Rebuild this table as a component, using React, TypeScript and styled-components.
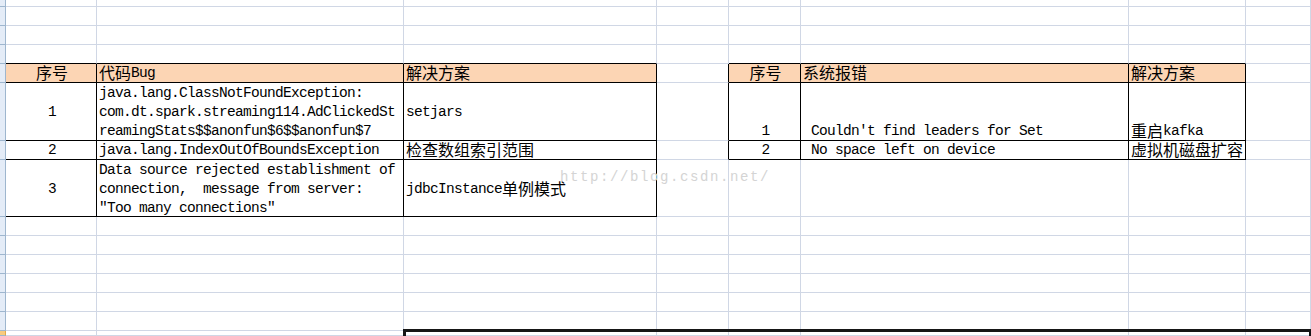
import styled, { createGlobalStyle } from "styled-components";

const GlobalStyle = createGlobalStyle`
  html, body {
    margin: 0;
    height: 100%;
    background: #fff;
  }
  #root {
    height: 100%;
  }
`;

const GRID = "#d0d7e5";
const INK = "#000";

type VAlign = "flex-start" | "center" | "flex-end";

type Entry = {
  lines: string[];
  align?: "left" | "center";
  valign?: VAlign;
  head?: boolean;
};

const Sheet = styled.div`
  position: relative;
  display: grid;
  grid-template-columns: 6px 91px 307px 253px 72px 72px 328px 117px 1fr;
  grid-template-rows: 7px repeat(4, 19px) 58px 19px 57px repeat(6, 19px) 1fr;
  height: 100vh;
  overflow: hidden;
  font-family: "Liberation Mono", "Noto Sans CJK SC", monospace;
  font-size: 14.5px;
  letter-spacing: -0.7px;
  color: #000;
`;

const RowHead = styled.div<{ $active?: boolean }>`
  box-sizing: border-box;
  background: ${({ $active }) => ($active ? "#f8cb7e" : "#e4ecf7")};
  border-right: 1px solid ${({ $active }) => ($active ? "#e2a94a" : "#9eb6ce")};
  border-bottom: 1px solid #9eb6ce;
`;

const Cell = styled.div<{ $right: string; $bottom: string }>`
  box-sizing: border-box;
  min-width: 0;
  min-height: 0;
  background: #fff;
  border-right: 1px solid ${({ $right }) => $right};
  border-bottom: 1px solid ${({ $bottom }) => $bottom};
`;

const DataCell = styled(Cell)<{ $head?: boolean; $align: string; $valign: VAlign }>`
  display: flex;
  flex-direction: column;
  justify-content: ${({ $valign }) => $valign};
  padding: 0 0 0 2px;
  overflow: hidden;
  text-align: ${({ $align }) => $align};
  background: ${({ $head }) => ($head ? "#fcd5b4" : "#fff")};
`;

// latin sits low in the row like the sheet font, so push the line box down 2px
const Line = styled.div`
  box-sizing: border-box;
  height: 19px;
  flex: none;
  padding-top: 2px;
  line-height: 17px;
  white-space: pre;
`;

const Han = styled.span`
  position: relative;
  top: -2px;
  font-family: "Noto Sans CJK SC", sans-serif;
  font-size: 16px;
  letter-spacing: 0;
  line-height: 19px;
  vertical-align: top;
`;

const Selection = styled.div`
  position: absolute;
  grid-column: 4;
  grid-row: 15;
  top: -2px;
  left: -1px;
  right: -1px;
  bottom: -6px;
  border: 3px solid #161616;
  pointer-events: none;
`;

const Watermark = styled.div`
  position: absolute;
  left: 560px;
  top: 169px;
  font-family: "Liberation Mono", monospace;
  font-size: 14px;
  letter-spacing: 1.6px;
  line-height: 16px;
  color: #d4d4d4;
  white-space: pre;
  pointer-events: none;
`;

const entries: Record<string, Entry> = {
  "4-0": { lines: ["序号"], align: "center", head: true },
  "4-1": { lines: ["代码Bug"], head: true },
  "4-2": { lines: ["解决方案"], head: true },
  "5-0": { lines: ["1"], align: "center", valign: "center" },
  "5-1": {
    lines: [
      "java.lang.ClassNotFoundException:",
      "com.dt.spark.streaming114.AdClickedSt",
      "reamingStats$$anonfun$6$$anonfun$7",
    ],
    valign: "center",
  },
  "5-2": { lines: ["setjars"], valign: "center" },
  "6-0": { lines: ["2"], align: "center" },
  "6-1": { lines: ["java.lang.IndexOutOfBoundsException"] },
  "6-2": { lines: ["检查数组索引范围"] },
  "7-0": { lines: ["3"], align: "center", valign: "center" },
  "7-1": {
    lines: [
      "Data source rejected establishment of",
      "connection,  message from server:",
      "\"Too many connections\"",
    ],
    valign: "center",
  },
  "7-2": { lines: ["jdbcInstance单例模式"], valign: "center" },
  "4-4": { lines: ["序号"], align: "center", head: true },
  "4-5": { lines: ["系统报错"], head: true },
  "4-6": { lines: ["解决方案"], head: true },
  "5-4": { lines: ["1"], align: "center" },
  "5-5": { lines: [" Couldn't find leaders for Set"] },
  "5-6": { lines: ["重启kafka"] },
  "6-4": { lines: ["2"], align: "center" },
  "6-5": { lines: [" No space left on device"] },
  "6-6": { lines: ["虚拟机磁盘扩容"] },
};

const ROWS = 15;
const COLS = 8;
const ACTIVE_ROW = 14;

// two bordered tables: A..C rows 4-7, E..G rows 4-6
const inTable = (r: number, c: number) =>
  (r >= 4 && r <= 7 && c >= 0 && c <= 2) || (r >= 4 && r <= 6 && c >= 4 && c <= 6);

const HAN = /([\u3000-\u9fff\uff00-\uffef]+)/;

function rich(text: string) {
  return text
    .split(HAN)
    .filter(Boolean)
    .map((part, i) => (HAN.test(part) ? <Han key={i}>{part}</Han> : part));
}

export default function App() {
  const cells = [];
  for (let r = 0; r < ROWS; r++) {
    cells.push(<RowHead key={`h${r}`} $active={r === ACTIVE_ROW} />);
    for (let c = 0; c < COLS; c++) {
      const right = inTable(r, c) || inTable(r, c + 1) ? INK : GRID;
      const bottom = inTable(r, c) || inTable(r + 1, c) ? INK : GRID;
      const entry = entries[`${r}-${c}`];
      if (entry) {
        cells.push(
          <DataCell
            key={`${r}-${c}`}
            $right={right}
            $bottom={bottom}
            $head={entry.head}
            $align={entry.align ?? "left"}
            $valign={entry.valign ?? "flex-end"}
          >
            {entry.lines.map((l, i) => (
              <Line key={i}>{rich(l)}</Line>
            ))}
          </DataCell>
        );
      } else {
        cells.push(<Cell key={`${r}-${c}`} $right={right} $bottom={bottom} />);
      }
    }
  }

  return (
    <>
      <GlobalStyle />
      <Sheet>
        {cells}
        <Selection />
        <Watermark>http://blog.csdn.net/</Watermark>
      </Sheet>
    </>
  );
}
